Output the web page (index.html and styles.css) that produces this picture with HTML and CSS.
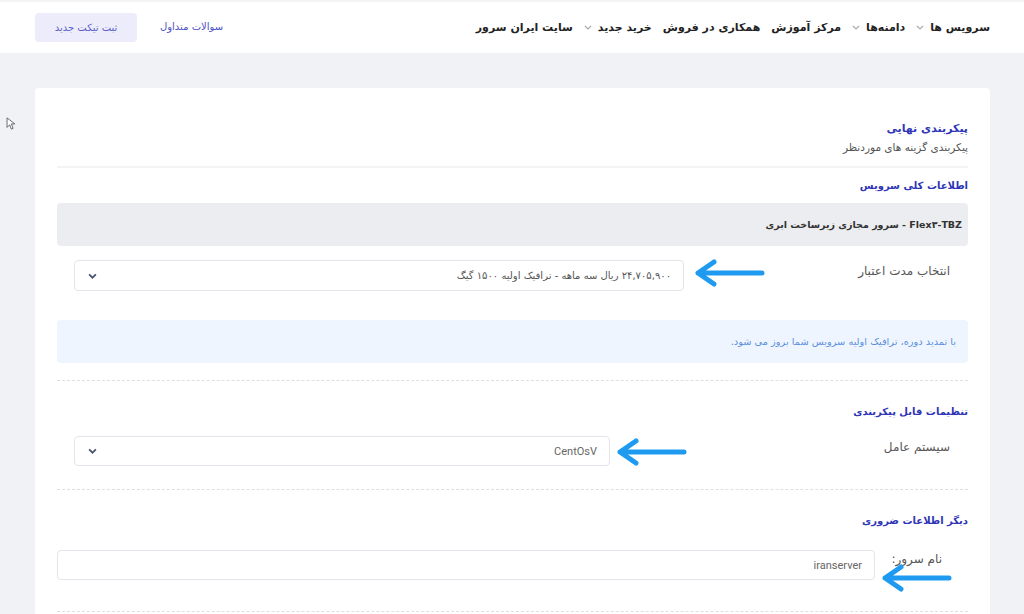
FILE: index.html
```html
<!DOCTYPE html>
<html lang="fa" dir="rtl">
<head>
    <meta charset="UTF-8">
    <meta name="viewport" content="width=device-width, initial-scale=1.0">
    <title>پیکربندی نهایی</title>
    <link rel="stylesheet" href="styles.css">
</head>
<body>
    <header class="topbar">
        <nav class="main-nav">
            <a class="nav-item">سرویس ها <svg class="caret" viewBox="0 0 8 5"><path d="M1 1l3 3 3-3"/></svg></a>
            <a class="nav-item">دامنه‌ها <svg class="caret" viewBox="0 0 8 5"><path d="M1 1l3 3 3-3"/></svg></a>
            <a class="nav-item">مرکز آموزش</a>
            <a class="nav-item">همکاری در فروش</a>
            <a class="nav-item">خرید جدید <svg class="caret" viewBox="0 0 8 5"><path d="M1 1l3 3 3-3"/></svg></a>
            <a class="nav-item">سایت ایران سرور</a>
        </nav>
        <div class="top-actions">
            <a class="faq-link">سوالات متداول</a>
            <a class="ticket-btn">ثبت تیکت جدید</a>
        </div>
    </header>

    <svg class="cursor" viewBox="0 0 10 15"><path d="M1 1v11l3-3 2 5 2-1-2-5h4z"/></svg>

    <main class="page">
        <section class="card">
            <div class="card-head">
                <h1>پیکربندی نهایی</h1>
                <p>پیکربندی گزینه های موردنظر</p>
            </div>

            <div class="section section-general">
                <h2>اطلاعات کلی سرویس</h2>
                <div class="product-box">Flex۳-TBZ - سرور مجازی زیرساخت ابری</div>

                <div class="field-row row-cycle">
                    <label class="field-label">انتخاب مدت اعتبار</label>
                    <div class="field-control">
                        <div class="select">
                            <span>۲۴,۷۰۵,۹۰۰ ریال سه ماهه - ترافیک اولیه ۱۵۰۰ گیگ</span>
                            <svg class="select-caret" viewBox="0 0 8 5"><path d="M1 1l3 3 3-3"/></svg>
                        </div>
                    </div>
                    <svg class="arrow arrow-cycle" viewBox="0 0 72 28"><path d="M5 14H69M21 3L5 14l16 11"/></svg>
                </div>

                <div class="info-box">با تمدید دوره، ترافیک اولیه سرویس شما بروز می شود.</div>
            </div>

            <div class="section section-config">
                <h2>تنظیمات قابل پیکربندی</h2>
                <div class="field-row row-os">
                    <label class="field-label">سیستم عامل</label>
                    <div class="field-control">
                        <div class="select select-os">
                            <span class="latin">CentOsV</span>
                            <svg class="select-caret" viewBox="0 0 8 5"><path d="M1 1l3 3 3-3"/></svg>
                        </div>
                    </div>
                    <svg class="arrow arrow-os" viewBox="0 0 72 28"><path d="M5 14H69M21 3L5 14l16 11"/></svg>
                </div>
            </div>

            <div class="section section-extra">
                <h2>دیگر اطلاعات ضروری</h2>
                <div class="field-row row-name">
                    <label class="field-label">نام سرور:</label>
                    <div class="field-control">
                        <div class="text-input"><span class="latin">iranserver</span></div>
                    </div>
                    <svg class="arrow arrow-name" viewBox="0 0 72 28"><path d="M5 14H69M21 3L5 14l16 11"/></svg>
                </div>
            </div>
        </section>
    </main>
</body>
</html>
```

FILE: styles.css
```css
html {
    direction: rtl;
}

body {
    margin: 0;
    padding: 0;
    background: #f1f2f5;
    color: #444;
    font-family: "DejaVu Sans", "Noto Sans", sans-serif;
    font-size: 11px;
    height: 614px;
    overflow: hidden;
    position: relative;
}

a {
    text-decoration: none;
    cursor: pointer;
}

.topbar {
    height: 51px;
    background: #fff;
    border-top: 2px solid #f4f4f6;
    display: flex;
    align-items: center;
    justify-content: space-between;
    padding: 0 34px 0 35px;
}

.main-nav {
    display: flex;
    align-items: center;
    gap: 11px;
}

.nav-item {
    display: flex;
    align-items: center;
    gap: 6px;
    font-size: 11px;
    font-weight: bold;
    color: #222;
    white-space: nowrap;
}

.caret {
    width: 8px;
    height: 5px;
    fill: none;
    stroke: #aaa;
    stroke-width: 1.2;
}

.top-actions {
    display: flex;
    align-items: center;
    gap: 23px;
}

.faq-link {
    color: #4d52c4;
    font-size: 10px;
    margin-bottom: 2px;
}

.ticket-btn {
    background: #ececfa;
    color: #5a5fc8;
    font-size: 10px;
    border-radius: 4px;
    width: 102px;
    height: 29px;
    display: flex;
    align-items: center;
    justify-content: center;
}

.cursor {
    position: absolute;
    left: 6px;
    top: 117px;
    width: 9px;
    height: 13px;
    fill: #fff;
    stroke: #444;
    stroke-width: 0.9;
}

.page {
    padding: 35px 34px 0 35px;
}

.card {
    background: #fff;
    border-radius: 4px 4px 0 0;
    padding: 32px 22px 0 22px;
    height: 494px;
}

.card-head {
    padding-bottom: 10px;
    border-bottom: 2px solid #f2f3f5;
}

.card-head h1 {
    margin: 0;
    font-size: 11px;
    line-height: 18px;
    color: #2f35b6;
}

.card-head p {
    margin: 0;
    font-size: 10.5px;
    line-height: 18px;
    color: #555;
}

.section {
    border-bottom: 1px dashed #dedfe3;
    padding-bottom: 17px;
}

.section h2 {
    margin: 10px 0 9px 0;
    font-size: 10px;
    line-height: 16px;
    color: #2f35b6;
}

.section-config h2 {
    margin: 23px 0 16px 0;
}

.section-config {
    padding-bottom: 23px;
}

.section-extra h2 {
    margin: 23px 0 21px 0;
}

.section-extra {
    padding-bottom: 31px;
}

.product-box {
    background: #ecedf1;
    border-radius: 4px;
    height: 43px;
    display: flex;
    align-items: center;
    padding: 0 6px;
    font-weight: bold;
    font-size: 9.5px;
    color: #333;
}

.field-row {
    position: relative;
    display: flex;
    align-items: flex-start;
}

.field-label {
    box-sizing: border-box;
    padding: 4px 18px 0 0;
    font-size: 12px;
    color: #555;
}

.field-control {
    flex: 1;
}

.row-cycle {
    margin-top: 14px;
}

.row-cycle .field-label {
    width: 284px;
}

.row-cycle .field-control {
    padding-left: 17px;
}

.row-os .field-label {
    width: 358px;
}

.row-os .field-control {
    padding-left: 17px;
}

.row-name .field-label {
    width: 93px;
    padding: 2px 26px 0 0;
}

.select,
.text-input {
    box-sizing: border-box;
    height: 31px;
    border: 1px solid #e4e5ea;
    border-radius: 4px;
    display: flex;
    align-items: center;
    justify-content: space-between;
    padding: 0 12px 0 12px;
    color: #555;
    font-size: 10px;
    background: #fff;
}

.select-os,
.text-input {
    height: 30px;
}

.latin {
    font-family: Roboto, "Liberation Sans", sans-serif;
    font-size: 11px;
    color: #666;
}

.select-caret {
    width: 9px;
    height: 6px;
    margin-left: 1px;
    fill: none;
    stroke: #4a5570;
    stroke-width: 1.6;
}

.info-box {
    margin-top: 29px;
    height: 43px;
    background: #eff5ff;
    border-radius: 4px;
    display: flex;
    align-items: center;
    padding: 0 12px;
    color: #5b8fdc;
    font-size: 9.8px;
}

.arrow {
    position: absolute;
    width: 72px;
    height: 28px;
    fill: none;
    stroke: #1e9bf0;
    stroke-width: 5;
    stroke-linecap: round;
    stroke-linejoin: round;
}

.arrow-cycle {
    left: 636px;
    top: -1px;
}

.arrow-os {
    left: 558px;
    top: 2px;
}

.arrow-name {
    left: 823px;
    top: 14px;
}
```
